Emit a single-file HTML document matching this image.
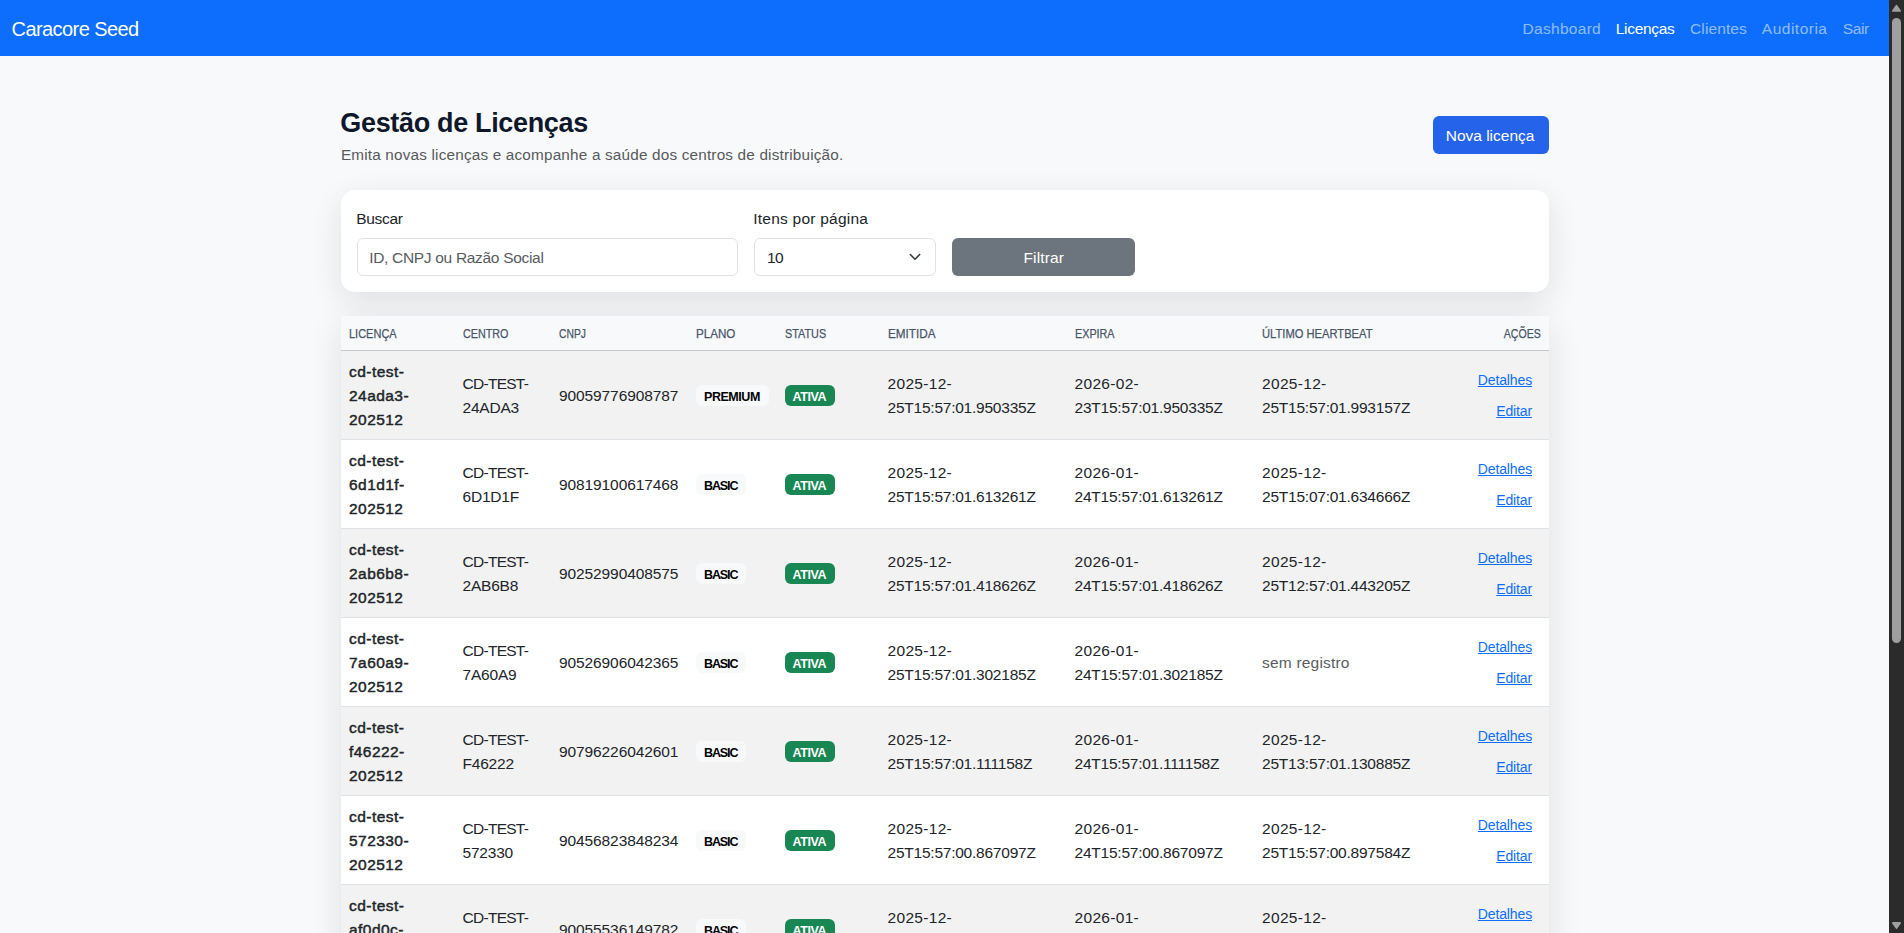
<!DOCTYPE html>
<html lang="pt-br">
<head>
<meta charset="utf-8">
<title>Caracore Seed - Licenças</title>
<style>
*{box-sizing:border-box;margin:0;padding:0}
html,body{width:1904px;height:933px;overflow:hidden}
body{background:#f8f9fa;font-family:"Liberation Sans",sans-serif;color:#212529;font-size:15.5px;line-height:24px;position:relative}
.t{position:absolute;white-space:nowrap}
.nav{position:absolute;left:0;top:0;width:1889px;height:56px;background:#0d6efd}
.brand{left:11.6px;top:14px;font-size:20px;line-height:30px;color:#fff;letter-spacing:-0.58px}
.nl{top:16.5px;font-size:15.5px;line-height:24px;color:rgba(255,255,255,.55)}
.nl.on{color:#fff}
.sb{position:absolute;left:1889px;top:0;width:15px;height:933px;background:#2b2b2b}
.sb .thumb{position:absolute;left:3px;top:18px;width:9px;height:625px;background:#9f9f9f;border-radius:5px}
.sb svg{position:absolute;left:0}

.title{left:340.3px;top:106.2px;font-size:27px;line-height:34px;font-weight:700;color:#0f172a;letter-spacing:-0.335px}
.sub{left:340.9px;top:143.2px;font-size:15.3px;line-height:24px;color:#575a5d;letter-spacing:0.185px}
.box{position:absolute}
.btn-new{left:1433px;top:116px;width:116px;height:38px;background:#2563eb;border-radius:6px}
.card{left:341px;top:190px;width:1208px;height:102px;background:#fff;border-radius:14px;box-shadow:0 10px 32px rgba(15,23,42,.11)}
.inp{top:238px;height:38px;border:1px solid #dee2e6;border-radius:6px;background:#fff}
.btn-f{left:952px;top:238px;width:183px;height:38px;background:#6c757d;border-radius:6px}
.lbl{top:206.8px;font-size:15.5px;line-height:24px;color:#212529}
.wt{color:#fff}
.tblwrap{position:absolute;left:341px;top:316px;width:1208px;height:700px;box-shadow:0 10px 32px rgba(15,23,42,.11);background:#fff}
table{border-collapse:collapse;table-layout:fixed;width:1208px}
th{background:#f8f9fa;height:34px;padding:2.5px 8px 0 8px;text-align:left;font-size:12.5px;font-weight:400;color:#475569;border-bottom:1px solid #c6c8cb;line-height:31px;vertical-align:middle;-webkit-text-stroke:0.25px #475569}
th span{display:inline-block;transform-origin:0 50%}
th.r{text-align:right}
th.r span{transform-origin:100% 50%}
td{padding:9px 8px 7px 8px;border-bottom:1px solid #dee2e6;vertical-align:middle;font-size:15.5px;line-height:24px;color:#212529;background:#fff;white-space:nowrap}
tr.s td{background:#f2f2f2}
td.id{font-weight:400;-webkit-text-stroke:0.45px #212529;letter-spacing:0.45px}
td.cn{letter-spacing:-0.2px}
td.cn .l1{letter-spacing:-0.72px}
td.cp{letter-spacing:-0.1px}
td.dt{letter-spacing:-0.23px}
td.dt .l1{letter-spacing:0.32px}
.badge{display:block;position:relative;top:0;width:max-content;height:21px;font-size:12.5px;font-weight:700;line-height:18px;padding:2.5px 9px 0 8px;border-radius:6px}
.b-l{background:#f8f9fa;color:#000;letter-spacing:-0.45px}
.b-l.ba{letter-spacing:-1.1px}
.b-s{background:#198754;color:#fff;letter-spacing:-0.38px}
td.act{text-align:right;padding-right:17px}
.act a{display:block;color:#0d6efd;font-size:14px;line-height:21px;text-decoration:underline;letter-spacing:-0.14px}
.act a+a{margin-top:10px}
.muted{color:#595c5f;letter-spacing:0.2px}
</style>
</head>
<body>
<div class="nav"></div>
<div class="t brand">Caracore Seed</div>
<div class="t nl" style="left:1522.5px;letter-spacing:0.3px">Dashboard</div>
<div class="t nl on" style="left:1615.8px;letter-spacing:-0.3px">Licenças</div>
<div class="t nl" style="left:1690px;letter-spacing:0.12px">Clientes</div>
<div class="t nl" style="left:1761.8px;letter-spacing:0.5px">Auditoria</div>
<div class="t nl" style="left:1842.8px;letter-spacing:-0.4px">Sair</div>
<div class="sb"><svg style="top:0" width="15" height="15" viewBox="0 0 15 15"><path d="M3.9 10.9 L7.5 5.7 L11.1 10.9 Z" fill="#9f9f9f" stroke="#9f9f9f" stroke-width="1.8" stroke-linejoin="round"/></svg><div class="thumb"></div><svg style="top:918px" width="15" height="15" viewBox="0 0 15 15"><path d="M3.9 4.9 L7.5 10.1 L11.1 4.9 Z" fill="#9f9f9f" stroke="#9f9f9f" stroke-width="1.8" stroke-linejoin="round"/></svg></div>

<div class="t title">Gestão de Licenças</div>
<div class="t sub">Emita novas licenças e acompanhe a saúde dos centros de distribuição.</div>
<div class="box btn-new"></div>
<div class="t wt" style="left:1445.7px;top:116.6px;line-height:38px">Nova licença</div>

<div class="box card"></div>
<div class="t lbl" style="left:356.3px;letter-spacing:-0.34px">Buscar</div>
<div class="box inp" style="left:357px;width:381px"></div>
<div class="t" style="left:369.2px;top:246.3px;color:#595c5f;letter-spacing:-0.31px">ID, CNPJ ou Razão Social</div>
<div class="t lbl" style="left:753.2px;top:206.9px;letter-spacing:0.24px">Itens por página</div>
<div class="box inp" style="left:754px;width:182px"></div>
<div class="t" style="left:767px;top:246.1px;letter-spacing:-0.5px">10</div>
<svg class="box" style="left:907px;top:251px" width="16" height="12" viewBox="0 0 16 12"><path d="M3.3 3.5 L8 8.2 L12.7 3.5" fill="none" stroke="#343a40" stroke-width="1.6" stroke-linecap="round" stroke-linejoin="round"/></svg>
<div class="box btn-f"></div>
<div class="t wt" style="left:1023.5px;top:246px;letter-spacing:0.13px">Filtrar</div>

<div class="tblwrap">
<table>
<colgroup><col style="width:113.5px"><col style="width:96.5px"><col style="width:137px"><col style="width:88.5px"><col style="width:103px"><col style="width:187px"><col style="width:187.5px"><col style="width:208px"><col style="width:87px"></colgroup>
<thead><tr><th><span style="transform:scaleX(.88)">LICENÇA</span></th><th><span style="transform:scaleX(.86)">CENTRO</span></th><th><span style="transform:scaleX(.826)">CNPJ</span></th><th><span style="transform:scaleX(.93)">PLANO</span></th><th><span style="transform:scaleX(.866)">STATUS</span></th><th><span style="transform:scaleX(.938)">EMITIDA</span></th><th><span style="transform:scaleX(.863)">EXPIRA</span></th><th><span style="transform:scaleX(.894)">ÚLTIMO HEARTBEAT</span></th><th class="r"><span style="transform:scaleX(.845)">AÇÕES</span></th></tr></thead>
<tbody>
<tr class="s"><td class="id">cd-test-<br>24ada3-<br>202512</td><td class="cn"><span class="l1">CD-TEST-</span><br>24ADA3</td><td class="cp">90059776908787</td><td><span class="badge b-l">PREMIUM</span></td><td><span class="badge b-s">ATIVA</span></td><td class="dt"><span class="l1">2025-12-</span><br>25T15:57:01.950335Z</td><td class="dt"><span class="l1">2026-02-</span><br>23T15:57:01.950335Z</td><td class="dt"><span class="l1">2025-12-</span><br>25T15:57:01.993157Z</td><td class="act"><a>Detalhes</a><a>Editar</a></td></tr>
<tr><td class="id">cd-test-<br>6d1d1f-<br>202512</td><td class="cn"><span class="l1">CD-TEST-</span><br>6D1D1F</td><td class="cp">90819100617468</td><td><span class="badge b-l ba">BASIC</span></td><td><span class="badge b-s">ATIVA</span></td><td class="dt"><span class="l1">2025-12-</span><br>25T15:57:01.613261Z</td><td class="dt"><span class="l1">2026-01-</span><br>24T15:57:01.613261Z</td><td class="dt"><span class="l1">2025-12-</span><br>25T15:07:01.634666Z</td><td class="act"><a>Detalhes</a><a>Editar</a></td></tr>
<tr class="s"><td class="id">cd-test-<br>2ab6b8-<br>202512</td><td class="cn"><span class="l1">CD-TEST-</span><br>2AB6B8</td><td class="cp">90252990408575</td><td><span class="badge b-l ba">BASIC</span></td><td><span class="badge b-s">ATIVA</span></td><td class="dt"><span class="l1">2025-12-</span><br>25T15:57:01.418626Z</td><td class="dt"><span class="l1">2026-01-</span><br>24T15:57:01.418626Z</td><td class="dt"><span class="l1">2025-12-</span><br>25T12:57:01.443205Z</td><td class="act"><a>Detalhes</a><a>Editar</a></td></tr>
<tr><td class="id">cd-test-<br>7a60a9-<br>202512</td><td class="cn"><span class="l1">CD-TEST-</span><br>7A60A9</td><td class="cp">90526906042365</td><td><span class="badge b-l ba">BASIC</span></td><td><span class="badge b-s">ATIVA</span></td><td class="dt"><span class="l1">2025-12-</span><br>25T15:57:01.302185Z</td><td class="dt"><span class="l1">2026-01-</span><br>24T15:57:01.302185Z</td><td class="muted">sem registro</td><td class="act"><a>Detalhes</a><a>Editar</a></td></tr>
<tr class="s"><td class="id">cd-test-<br>f46222-<br>202512</td><td class="cn"><span class="l1">CD-TEST-</span><br>F46222</td><td class="cp">90796226042601</td><td><span class="badge b-l ba">BASIC</span></td><td><span class="badge b-s">ATIVA</span></td><td class="dt"><span class="l1">2025-12-</span><br>25T15:57:01.111158Z</td><td class="dt"><span class="l1">2026-01-</span><br>24T15:57:01.111158Z</td><td class="dt"><span class="l1">2025-12-</span><br>25T13:57:01.130885Z</td><td class="act"><a>Detalhes</a><a>Editar</a></td></tr>
<tr><td class="id">cd-test-<br>572330-<br>202512</td><td class="cn"><span class="l1">CD-TEST-</span><br>572330</td><td class="cp">90456823848234</td><td><span class="badge b-l ba">BASIC</span></td><td><span class="badge b-s">ATIVA</span></td><td class="dt"><span class="l1">2025-12-</span><br>25T15:57:00.867097Z</td><td class="dt"><span class="l1">2026-01-</span><br>24T15:57:00.867097Z</td><td class="dt"><span class="l1">2025-12-</span><br>25T15:57:00.897584Z</td><td class="act"><a>Detalhes</a><a>Editar</a></td></tr>
<tr class="s"><td class="id">cd-test-<br>af0d0c-<br>202512</td><td class="cn"><span class="l1">CD-TEST-</span><br>AF0D0C</td><td class="cp">90055536149782</td><td><span class="badge b-l ba">BASIC</span></td><td><span class="badge b-s">ATIVA</span></td><td class="dt"><span class="l1">2025-12-</span><br>25T15:57:00.613510Z</td><td class="dt"><span class="l1">2026-01-</span><br>24T15:57:00.613510Z</td><td class="dt"><span class="l1">2025-12-</span><br>25T15:57:00.640117Z</td><td class="act"><a>Detalhes</a><a>Editar</a></td></tr>
</tbody>
</table>
</div>
</body>
</html>
